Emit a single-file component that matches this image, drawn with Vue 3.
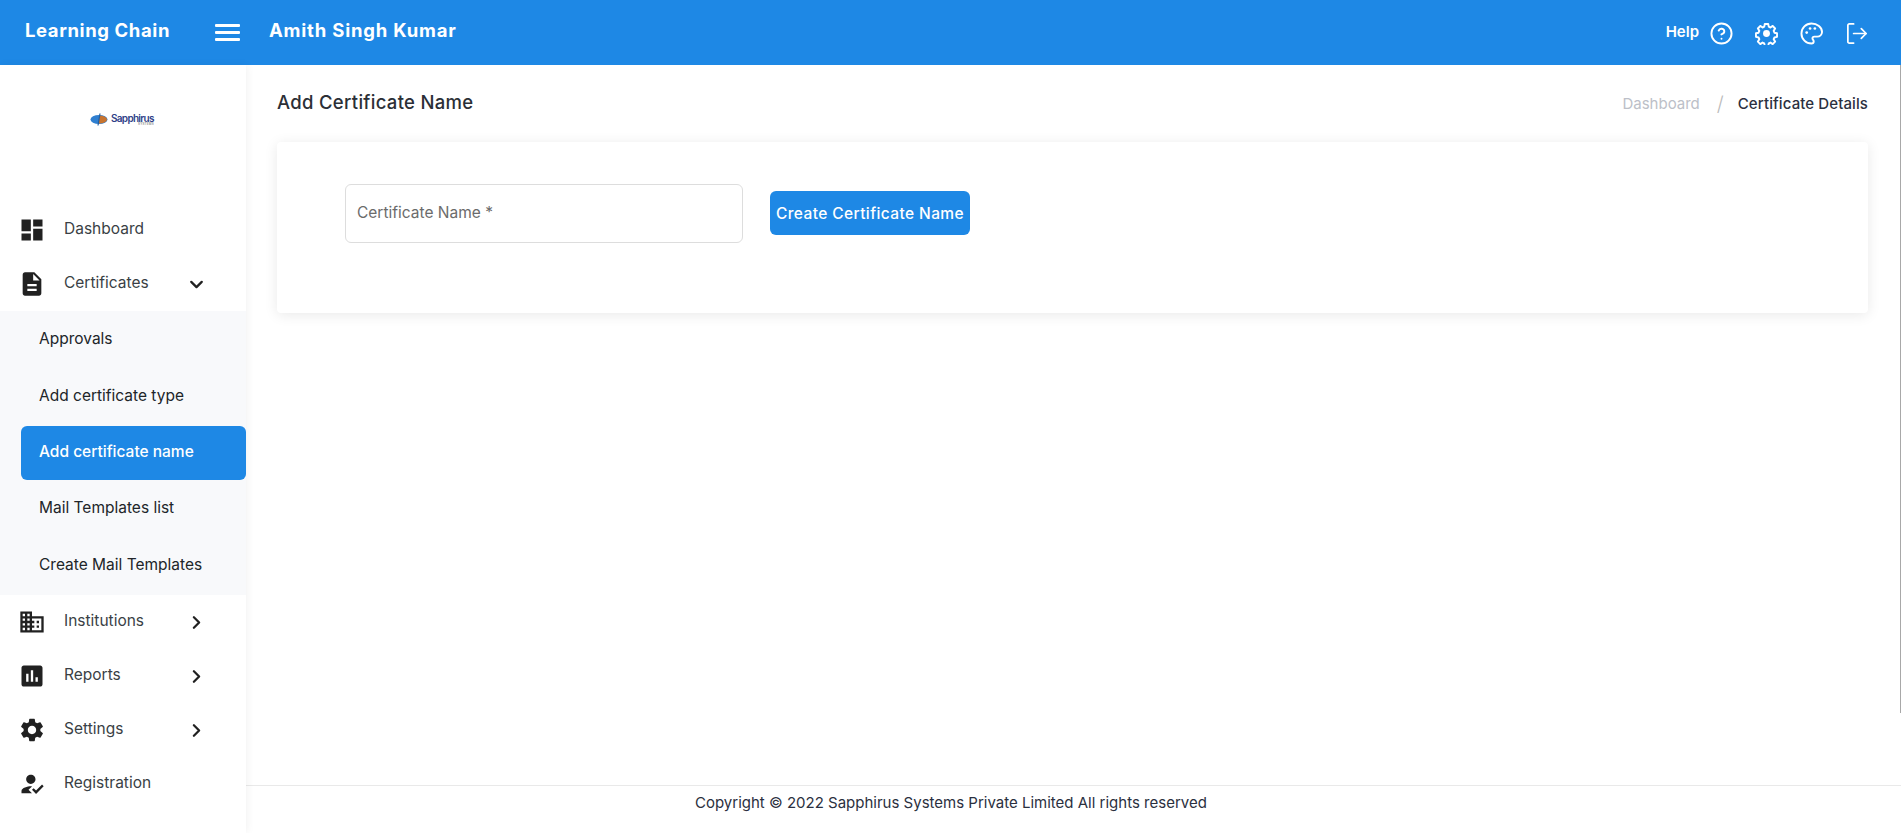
<script setup>
const icons = {
  dashboard: 'M3 13h8V3H3v10zm0 8h8v-6H3v6zm10 0h8V11h-8v10zm0-18v6h8V3h-8z',
  description: 'M14 2H6c-1.1 0-1.99.9-1.99 2L4 20c0 1.1.89 2 1.99 2H18c1.1 0 2-.9 2-2V8l-6-6zm2 16H8v-2h8v2zm0-4H8v-2h8v2zm-3-5V3.5L18.5 9H13z',
  domain: 'M12 7V3H2v18h20V7H12zM6 19H4v-2h2v2zm0-4H4v-2h2v2zm0-4H4V9h2v2zm0-4H4V5h2v2zm4 12H8v-2h2v2zm0-4H8v-2h2v2zm0-4H8V9h2v2zm0-4H8V5h2v2zm10 12h-8v-2h2v-2h-2v-2h2v-2h-2V9h8v10zm-2-8h-2v2h2v-2zm0 4h-2v2h2v-2z',
  assessment: 'M19 3H5c-1.1 0-2 .9-2 2v14c0 1.1.9 2 2 2h14c1.1 0 2-.9 2-2V5c0-1.1-.9-2-2-2zM9 17H7v-7h2v7zm4 0h-2V7h2v10zm4 0h-2v-4h2v4z',
  settings: 'M19.14 12.94c.04-.3.06-.61.06-.94 0-.32-.02-.64-.07-.94l2.03-1.58c.18-.14.23-.41.12-.61l-1.92-3.32c-.12-.22-.37-.29-.59-.22l-2.39.96c-.5-.38-1.03-.7-1.62-.94l-.36-2.54c-.04-.24-.24-.41-.48-.41h-3.84c-.24 0-.43.17-.47.41l-.36 2.54c-.59.24-1.13.57-1.62.94l-2.39-.96c-.22-.08-.47 0-.59.22L2.74 8.87c-.12.21-.08.47.12.61l2.03 1.58c-.05.3-.09.63-.09.94s.02.64.07.94l-2.03 1.58c-.18.14-.23.41-.12.61l1.92 3.32c.12.22.37.29.59.22l2.39-.96c.5.38 1.03.7 1.62.94l.36 2.54c.05.24.24.41.48.41h3.84c.24 0 .44-.17.47-.41l.36-2.54c.59-.24 1.13-.56 1.62-.94l2.39.96c.22.08.47 0 .59-.22l1.92-3.32c.12-.22.07-.47-.12-.61l-2.01-1.58zM12 15.6c-1.98 0-3.6-1.62-3.6-3.6s1.62-3.6 3.6-3.6 3.6 1.62 3.6 3.6-1.62 3.6-3.6 3.6z',
  howto: 'M9 17l3-2.94c-.39-.04-.68-.06-1-.06-2.67 0-8 1.34-8 4v2h9l-3-3zm2-5c2.21 0 4-1.79 4-4s-1.79-4-4-4-4 1.79-4 4 1.79 4 4 4zm4.47 8.5L12 17l1.4-1.41 2.07 2.08 5.13-5.17 1.4 1.41z'
}
const topItems = [
  { label: 'Dashboard', icon: icons.dashboard },
  { label: 'Certificates', icon: icons.description, caret: 'down' }
]
const subItems = [
  { label: 'Approvals' },
  { label: 'Add certificate type' },
  { label: 'Add certificate name', active: true },
  { label: 'Mail Templates list' },
  { label: 'Create Mail Templates' }
]
const bottomItems = [
  { label: 'Institutions', icon: icons.domain, caret: 'right' },
  { label: 'Reports', icon: icons.assessment, caret: 'right' },
  { label: 'Settings', icon: icons.settings, caret: 'right' },
  { label: 'Registration', icon: icons.howto }
]
</script>

<template>
  <div class="page">
    <header class="topbar">
      <div class="brand">Learning Chain</div>
      <button class="burger" aria-label="Menu"><span></span><span></span><span></span></button>
      <div class="user">Amith Singh Kumar</div>
      <div class="actions">
        <span class="help">Help</span>
        <svg class="act" viewBox="0 0 24 24" fill="none" stroke="#fff" stroke-width="2" stroke-linecap="round" stroke-linejoin="round"><circle cx="12" cy="12" r="10.500"/><path d="M9.090 9a3 3 0 0 1 5.830 1c0 2-3 3-3 3"/><path d="M12 17.500h.01"/></svg>
        <svg class="act" viewBox="0 0 24 24" fill="none" stroke="#fff" stroke-width="2.200" stroke-linejoin="round"><path d="M10 1.500h4l.6 3 2 .9 2.600-1.700 2.800 2.800-1.700 2.600.9 2 3 .6v4l-3 .6-.9 2 1.700 2.600-2.800 2.800-2.600-1.700-2 .9-.6 3h-4l-.6-3-2-.9-2.600 1.700-2.800-2.800 1.700-2.600-.9-2-3-.6v-4l3-.6.9-2-1.700-2.600 2.800-2.800 2.600 1.700 2-.9z" transform="translate(1.200 .6) scale(.9 .95)"/><circle cx="12" cy="12" r="3.600" fill="#fff" stroke="none"/></svg>
        <svg class="act" viewBox="0 0 24 24" fill="none" stroke="#fff" stroke-width="2" stroke-linecap="round" stroke-linejoin="round"><path d="M12 1.500a10.500 10.500 0 0 0 0 21c1.400 0 2.300-1 2.300-2.200 0-.6-.2-1.100-.6-1.500-.4-.5-.7-.9-.7-1.500 0-1.100.9-2 2-2h3a5 5 0 0 0 5-4.800C23 5.500 18 1.500 12 1.500z"/><circle cx="7" cy="11" r="1.400" fill="#fff" stroke="none"/><circle cx="10.500" cy="6.800" r="1.400" fill="#fff" stroke="none"/><circle cx="15.500" cy="6.800" r="1.400" fill="#fff" stroke="none"/></svg>
        <svg class="act last" viewBox="0 0 24 24" fill="none" stroke="#fff" stroke-width="1.800" stroke-linecap="round" stroke-linejoin="round"><path d="M9 22H4.500A1.500 1.500 0 0 1 3 20.500v-17A1.500 1.500 0 0 1 4.500 2H9"/><path d="M17 17l5-5-5-5"/><path d="M22 12H9"/></svg>
      </div>
    </header>

    <div class="body">
      <aside class="sidebar">
        <div class="logo">
          <svg width="18" height="13" viewBox="0 0 18 13"><ellipse cx="9" cy="6.500" rx="8.500" ry="4.500" fill="#2f7fd0"/><path d="M9 2.500c3 0 8 1.200 8 4s-5 4-8 4z" fill="#c8742f"/><path d="M10 .5L8 12.500" stroke="#1c5fa8" stroke-width="1.200"/></svg>
          <div class="logo-text"><span class="logo-main">Sapphirus</span><span class="logo-sub">SYSTEMS</span></div>
        </div>
        <nav class="nav">
          <a v-for="item in topItems" :key="item.label" class="nav-item">
            <svg class="nav-icon" viewBox="0 0 24 24"><path :d="item.icon" fill="#212121"/></svg>
            <span class="nav-label">{{ item.label }}</span>
            <svg v-if="item.caret === 'down'" class="caret" viewBox="0 0 24 24" fill="none" stroke="#212121" stroke-width="2.600" stroke-linecap="round" stroke-linejoin="round"><path d="M6 9l6 6 6-6"/></svg>
          </a>
          <div class="submenu">
            <a v-for="s in subItems" :key="s.label" class="sub-item" :class="{ active: s.active }">{{ s.label }}</a>
          </div>
          <a v-for="item in bottomItems" :key="item.label" class="nav-item">
            <svg class="nav-icon" viewBox="0 0 24 24"><path :d="item.icon" fill="#212121"/></svg>
            <span class="nav-label">{{ item.label }}</span>
            <svg v-if="item.caret === 'right'" class="caret" viewBox="0 0 24 24" fill="none" stroke="#212121" stroke-width="2.600" stroke-linecap="round" stroke-linejoin="round"><path d="M9 6l6 6-6 6"/></svg>
          </a>
        </nav>
      </aside>

      <main class="main">
        <div class="content">
          <div class="titlebar">
            <h1 class="title">Add Certificate Name</h1>
            <div class="crumbs">
              <span class="crumb-link">Dashboard</span>
              <span class="crumb-sep">/</span>
              <span class="crumb-current">Certificate Details</span>
            </div>
          </div>
          <section class="card">
            <div class="field"><span class="placeholder">Certificate Name *</span></div>
            <button class="create">Create Certificate Name</button>
          </section>
        </div>
        <footer class="footer">Copyright © 2022 Sapphirus Systems Private Limited All rights reserved</footer>
        <div class="scroll-thumb"></div>
      </main>
    </div>
  </div>
</template>

<style>
html, body { margin: 0; padding: 0; background: #fff; overflow: hidden; }
</style>

<style scoped>
.page {
  width: 1901px;
  height: 833px;
  display: flex;
  flex-direction: column;
  font-family: Inter, "Open Sans", sans-serif;
  color: #212529;
  overflow: hidden;
}
.topbar {
  height: 65px;
  flex: none;
  background: #1e88e5;
  color: #fff;
  display: flex;
  align-items: center;
  padding-left: 25px;
  padding-right: 33px;
}
.brand { width: 190px; font-size: 18.500px; font-weight: 700; letter-spacing: .6px; margin-top: -5px; }
.burger {
  width: 25px;
  padding: 0;
  border: 0;
  background: none;
  display: flex;
  flex-direction: column;
  gap: 4px;
}
.burger span { display: block; height: 3px; background: #fff; border-radius: 1px; }
.user { margin-left: 29px; font-size: 18.500px; font-weight: 700; letter-spacing: .8px; margin-top: -5px; }
.actions { margin-left: auto; display: flex; align-items: center; }
.help { font-size: 15px; font-weight: 600; margin-right: 11px; margin-top: -3px; }
.act { width: 23px; height: 23px; margin-right: 22px; margin-top: 1px; }
.act.last { margin-right: 0; }

.body { flex: 1; display: flex; min-height: 0; }
.sidebar {
  width: 246px;
  flex: none;
  background: #fff;
  box-shadow: 1px 0 8px rgba(0, 0, 0, .06);
  z-index: 1;
}
.logo {
  height: 138px;
  box-sizing: border-box;
  padding: 48px 0 0 90px;
  display: flex;
  align-items: flex-start;
  gap: 3px;
}
.logo-text { display: flex; flex-direction: column; align-items: flex-end; line-height: 1; }
.logo-main { font-size: 10px; font-weight: 600; color: #2f3f88; letter-spacing: -.7px; }
.logo-sub { font-size: 3px; color: #555; letter-spacing: .2px; }

.nav { display: flex; flex-direction: column; }
.nav-item {
  height: 54px;
  display: flex;
  align-items: center;
  padding-left: 18px;
  color: #3a3f45;
  font-size: 15.500px;
}
.nav-icon { width: 28px; height: 28px; flex: none; }
.nav-label { margin-left: 18px; width: 122px; margin-top: -4px; }
.caret { width: 21px; height: 21px; flex: none; }
.submenu { background: #f8f9fb; height: 284px; }
.sub-item {
  display: flex;
  align-items: center;
  height: 57px;
  margin-left: 21px;
  padding: 0 0 3px 18px;
  font-size: 15.500px;
  color: #212529;
  border-radius: 6px;
  box-sizing: border-box;
}
.sub-item.active { background: #1e88e5; color: #fff; font-weight: 500; height: 54px; margin-top: 1px; }

.main { flex: 1; display: flex; flex-direction: column; min-width: 0; position: relative; }
.scroll-thumb { position: absolute; top: 0; right: 0; width: 1px; height: 648px; background: #a8a8a8; }
.content { flex: 1; padding: 0 33px 0 31px; }
.titlebar { height: 77px; display: flex; align-items: center; justify-content: space-between; }
.title { margin: 0; font-size: 18.500px; font-weight: 500; letter-spacing: .3px; color: #2b2f36; margin-top: -3px; }
.crumbs { display: flex; align-items: center; font-size: 15px; }
.crumb-link { color: #bcc0c8; }
.crumb-sep { color: #bbb; font-size: 20px; font-weight: 300; margin: 0 14px 0 17px; }
.crumb-current { color: #2b3040; font-weight: 500; letter-spacing: .1px; }
.card {
  height: 171px;
  background: #fff;
  border-radius: 4px;
  box-shadow: 0 2px 14px rgba(0, 0, 0, .09);
  display: flex;
  align-items: flex-start;
  padding: 42px 0 0 68px;
  box-sizing: border-box;
}
.field {
  width: 398px;
  height: 59px;
  box-sizing: border-box;
  border: 1px solid #dddddd;
  border-radius: 6px;
  padding: 18px 0 0 11px;
  font-size: 15.500px;
  color: #6b6b6b;
}
.create {
  margin: 7px 0 0 27px;
  width: 200px;
  height: 44px;
  border: 0;
  border-radius: 6px;
  background: #1e88e5;
  color: #fff;
  font-family: inherit;
  font-size: 15.500px;
  font-weight: 500;
  letter-spacing: .4px;
  padding: 0;
  white-space: nowrap;
}
.footer {
  height: 48px;
  flex: none;
  box-sizing: border-box;
  border-top: 1px solid #e9e9e9;
  font-size: 15px;
  color: #2b3040;
  padding: 7px 0 0 449px;
}
</style>
